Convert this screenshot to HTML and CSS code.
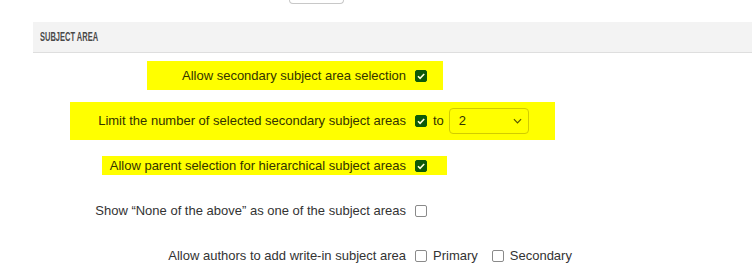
FILE: index.html
```html
<!DOCTYPE html>
<html lang="en">
<head>
    <meta charset="UTF-8">
    <title>Subject Area Settings</title>
    <link rel="stylesheet" href="styles.css">
</head>
<body>
    <div class="select-stub"></div>

    <div class="section-header"><span>SUBJECT AREA</span></div>

    <div class="settings">
        <div class="row">
            <div class="hl hl-one">
                <span class="label">Allow secondary subject area selection</span>
                <span class="check checked">
                    <svg viewBox="0 0 12 12" width="12" height="12"><path d="M3 6.2l2.1 2.1L9.2 4" fill="none" stroke="#ffffd8" stroke-width="1.6"/></svg>
                </span>
            </div>
        </div>

        <div class="row">
            <div class="hl hl-two">
                <span class="label">Limit the number of selected secondary subject areas</span>
                <span class="check checked">
                    <svg viewBox="0 0 12 12" width="12" height="12"><path d="M3 6.2l2.1 2.1L9.2 4" fill="none" stroke="#ffffd8" stroke-width="1.6"/></svg>
                </span>
                <span class="to">to</span>
                <div class="select">
                    <span>2</span>
                    <svg viewBox="0 0 10 6" width="9" height="6"><path d="M1 1l4 4 4-4" fill="none" stroke="#555500" stroke-width="1.3"/></svg>
                </div>
            </div>
        </div>

        <div class="row">
            <div class="hl hl-three">
                <span class="label">Allow parent selection for hierarchical subject areas</span>
                <span class="check checked">
                    <svg viewBox="0 0 12 12" width="12" height="12"><path d="M3 6.2l2.1 2.1L9.2 4" fill="none" stroke="#ffffd8" stroke-width="1.6"/></svg>
                </span>
            </div>
        </div>

        <div class="row">
            <span class="label">Show “None of the above” as one of the subject areas</span>
            <span class="check"></span>
        </div>

        <div class="row">
            <span class="label">Allow authors to add write-in subject area</span>
            <span class="check"></span>
            <span class="option">Primary</span>
            <span class="check"></span>
            <span class="option">Secondary</span>
        </div>
    </div>
</body>
</html>
```

FILE: styles.css
```css
* {
    margin: 0;
    padding: 0;
    box-sizing: border-box;
}

body {
    background: #fff;
    font-family: "Liberation Sans", Arial, sans-serif;
    font-size: 13px;
    color: #333;
    width: 752px;
    height: 279px;
    overflow: hidden;
}

.select-stub {
    margin-left: 289px;
    width: 55px;
    height: 4px;
    border: 1px solid #c8c8c8;
    border-top: none;
    border-radius: 0 0 4px 4px;
}

.section-header {
    margin-top: 18px;
    margin-left: 33px;
    height: 31px;
    padding-left: 7px;
    display: flex;
    align-items: center;
    background: #f3f3f3;
    border-bottom: 1px solid #dedede;
    font-weight: bold;
    font-size: 12.5px;
    color: #484848;
}

.section-header span {
    display: inline-block;
    transform: scaleX(0.6);
    transform-origin: left center;
}

.settings {
    display: flex;
    flex-direction: column;
}

.row {
    height: 45px;
    display: flex;
    align-items: center;
}

.row > .label {
    width: 406px;
    text-align: right;
}

/* highlighter marks drawn over the first three rows */
.hl {
    display: flex;
    align-items: center;
    background: #ffff00;
    color: #333300;
}

.hl .label {
    text-align: right;
}

.hl-one {
    margin-left: 147px;
    padding: 7px 16px 7px 0;
}

.hl-one .label {
    width: 259px;
}

.hl-two {
    margin-left: 70px;
    padding: 6px 26px 6px 0;
}

.hl-two .label {
    width: 336px;
}

.hl-three {
    margin-left: 102px;
    padding: 2px 20px 2px 0;
}

.hl-three .label {
    width: 304px;
}

.check {
    width: 12px;
    height: 12px;
    margin-left: 9px;
    border: 1px solid #8a8a8a;
    border-radius: 2px;
    background: #fff;
    display: flex;
    align-items: center;
    justify-content: center;
    flex-shrink: 0;
}

.check.checked {
    background: #0d5a08;
    border-color: #0d5a08;
}

.check.checked svg {
    display: block;
    margin: -1px;
}

.to {
    margin-left: 6px;
}

.select {
    margin-left: 5px;
    width: 80px;
    height: 26px;
    border: 1px solid #d2cc00;
    border-radius: 4px;
    display: flex;
    align-items: center;
    justify-content: space-between;
    padding: 0 6px 0 9px;
}

.option {
    margin-left: 6px;
    margin-right: 5px;
}
```
